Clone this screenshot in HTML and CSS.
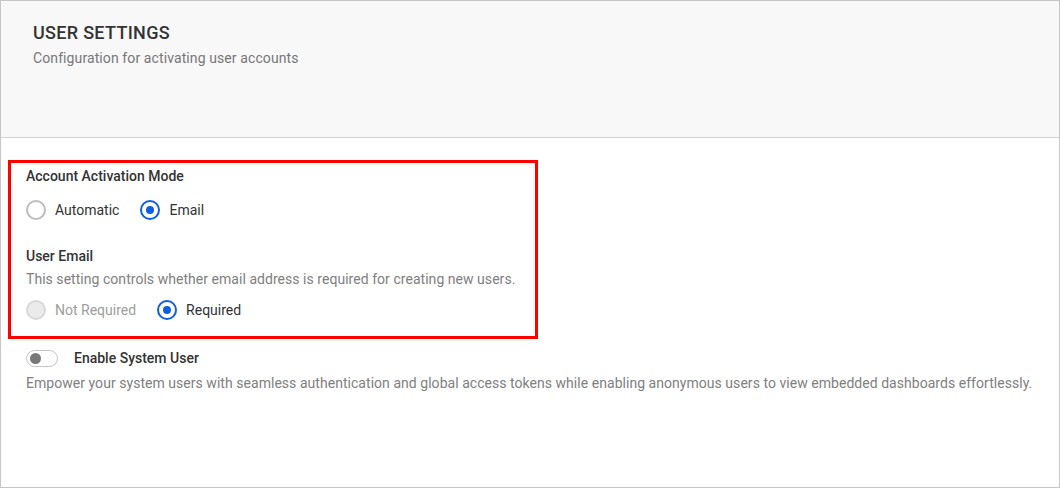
FILE: index.html
```html
<!DOCTYPE html>
<html lang="en">
<head>
    <meta charset="UTF-8">
    <title>User Settings</title>
    <link rel="stylesheet" href="styles.css">
</head>
<body>
    <div class="settings-page">
        <!-- header -->
        <div class="page-header">
            <h1 class="page-title">USER SETTINGS</h1>
            <p class="page-subtitle">Configuration for activating user accounts</p>
        </div>

        <div class="page-body">
            <!-- activation box -->
            <div class="highlight-box">
                <div class="field-label">Account Activation Mode</div>
                <div class="radio-row">
                    <label class="radio-item">
                        <span class="radio"></span>
                        <span class="radio-text">Automatic</span>
                    </label>
                    <label class="radio-item">
                        <span class="radio checked"></span>
                        <span class="radio-text">Email</span>
                    </label>
                </div>

                <div class="field-label email-label">User Email</div>
                <div class="field-desc">This setting controls whether email address is required for creating new users.</div>
                <div class="radio-row">
                    <label class="radio-item disabled">
                        <span class="radio"></span>
                        <span class="radio-text">Not Required</span>
                    </label>
                    <label class="radio-item">
                        <span class="radio checked"></span>
                        <span class="radio-text">Required</span>
                    </label>
                </div>
            </div>

            <!-- system user -->
            <div class="toggle-row">
                <span class="toggle"><span class="toggle-knob"></span></span>
                <span class="field-label">Enable System User</span>
            </div>
            <div class="field-desc system-desc">Empower your system users with seamless authentication and global access tokens while enabling anonymous users to view embedded dashboards effortlessly.</div>
        </div>
    </div>
</body>
</html>
```

FILE: styles.css
```css
* {
    margin: 0;
    padding: 0;
    box-sizing: border-box;
}

body {
    font-family: Roboto, 'Liberation Sans', sans-serif;
    background: #ffffff;
    color: #333333;
    width: 1060px;
    height: 488px;
    overflow: hidden;
}

.settings-page {
    height: 488px;
    border: 1px solid #c6c6c6;
    background: #ffffff;
}

/* header */
.page-header {
    height: 137px;
    background: #f8f8f8;
    border-bottom: 1px solid #d2d2d2;
    padding: 22px 32px 0;
}

.page-title {
    font-size: 18px;
    font-weight: 500;
    letter-spacing: 0.3px;
    line-height: 20px;
    color: #333333;
}

.page-subtitle {
    font-size: 14px;
    line-height: 18px;
    margin-top: 6px;
    letter-spacing: 0.1px;
    color: #777777;
}

/* body */
.page-body {
    padding: 22px 0 0 7px;
}

.highlight-box {
    width: 530px;
    border: 3px solid #ff0000;
    padding: 4px 15px 11px;
}

.field-label {
    font-size: 14px;
    font-weight: 500;
    line-height: 18px;
    color: #333333;
}

.email-label {
    margin-top: 22px;
}

.field-desc {
    font-size: 14px;
    line-height: 18px;
    margin-top: 5px;
    letter-spacing: 0.04px;
    color: #808080;
}

.radio-row {
    display: flex;
    gap: 21px;
    height: 30px;
    align-items: center;
    margin-top: 10px;
}

.field-desc + .radio-row {
    margin-top: 7px;
}

.radio-item {
    display: flex;
    align-items: center;
    gap: 9px;
}

.radio {
    width: 20px;
    height: 20px;
    border-radius: 50%;
    border: 2px solid #bdbdbd;
    background: #ffffff;
    position: relative;
}

.radio.checked {
    border-color: #0d5fe3;
}

.radio.checked::after {
    content: "";
    position: absolute;
    left: 4px;
    top: 4px;
    width: 8px;
    height: 8px;
    border-radius: 50%;
    background: #0d5fe3;
}

.radio-text {
    font-size: 14px;
    color: #333333;
}

.radio-item.disabled .radio {
    background: #ebebeb;
    border-color: #d8d8d8;
}

.radio-item.disabled .radio-text {
    color: #9e9e9e;
}

/* system user */
.toggle-row {
    display: flex;
    align-items: center;
    gap: 16px;
    padding-left: 18px;
    margin-top: 10px;
}

.toggle {
    width: 32px;
    height: 17px;
    border: 1px solid #c4c4c4;
    border-radius: 9px;
    display: flex;
    align-items: center;
    padding-left: 3px;
}

.toggle-knob {
    width: 11px;
    height: 11px;
    border-radius: 50%;
    background: #777777;
}

.system-desc {
    padding-left: 18px;
    margin-top: 7px;
}
```
